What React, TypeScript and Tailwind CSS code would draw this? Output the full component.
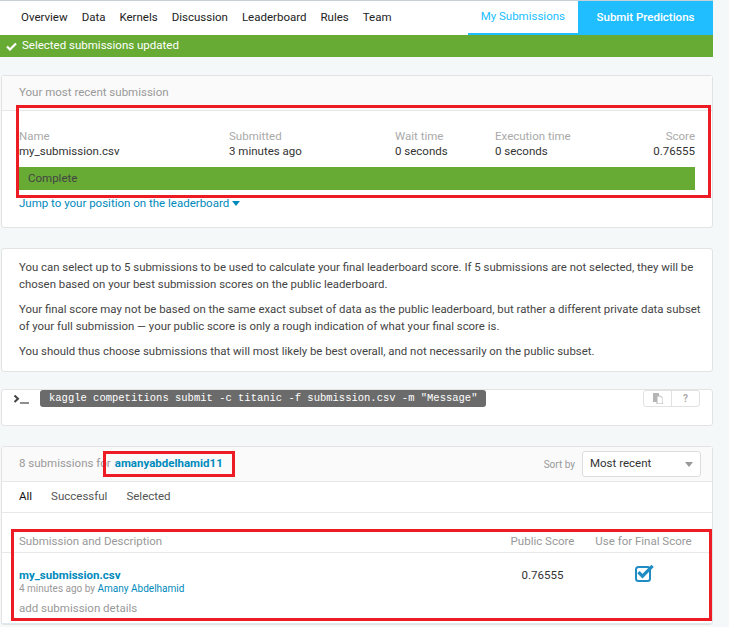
import React from 'react';

const navItems = ['Overview', 'Data', 'Kernels', 'Discussion', 'Leaderboard', 'Rules', 'Team'];

function CheckSquare() {
  return (
    <svg width="19" height="18" viewBox="0 0 19 18" fill="none">
      <rect x="1" y="3" width="14" height="14" rx="2.5" stroke="#1f8dc4" strokeWidth="2" />
      <path d="M4.5 9.2l3 3L16.5 3" stroke="#1f8dc4" strokeWidth="3.2" strokeLinecap="square" />
    </svg>
  );
}

export default function App() {
  return (
    <div className="relative w-[729px] h-[627px] overflow-hidden bg-[#f5f8f9] font-['Roboto',sans-serif] text-[11.5px] text-[#333]">
      <div className="h-px w-[713px] bg-[#c7d0d8]" />
      <div className="w-[713px]">
        {/* Nav */}
        <div className="flex h-[34px] bg-white">
          <div className="flex items-center gap-[14px] pl-[21px] text-[#222]">
            {navItems.map((n) => (
              <span key={n}>{n}</span>
            ))}
          </div>
          <div className="ml-auto flex">
            <div className="flex items-center px-[13px] text-[#20beff] border-b-2 border-[#20beff]">My Submissions</div>
            <div className="flex w-[135px] items-center justify-center bg-[#20beff] font-medium text-white">Submit Predictions</div>
          </div>
        </div>
        {/* Banner */}
        <div className="flex h-[22px] items-center gap-[5px] bg-[#67ab34] pl-[6px] text-white">
          <svg width="11" height="9" viewBox="0 0 11 9">
            <path d="M1 4.5l3 3L10 1.5" stroke="white" strokeWidth="2.2" fill="none" />
          </svg>
          <span>Selected submissions updated</span>
        </div>
      </div>

      <div className="ml-[1px] w-[712px] pt-[18px]">
        {/* Most recent submission */}
        <div className="rounded-[3px] border border-[#e3e3e3] bg-white">
          <div className="flex h-[35px] items-center border-b border-[#e8e8e8] bg-[#fafafa] px-[17px] text-[#999]">
            Your most recent submission
          </div>
          <div className="px-[17px] pt-[18px] pb-[17px]">
            <div className="grid grid-cols-[210px_166px_100px_1fr_auto] leading-[15px]">
              <div>
                <div className="text-[#aaa]">Name</div>
                <div>my_submission.csv</div>
              </div>
              <div>
                <div className="text-[#aaa]">Submitted</div>
                <div>3 minutes ago</div>
              </div>
              <div>
                <div className="text-[#aaa]">Wait time</div>
                <div>0 seconds</div>
              </div>
              <div>
                <div className="text-[#aaa]">Execution time</div>
                <div>0 seconds</div>
              </div>
              <div className="text-right">
                <div className="text-[#aaa]">Score</div>
                <div>0.76555</div>
              </div>
            </div>
            <div className="mt-[8px] flex h-[23px] items-center bg-[#67ab34] pl-[9px] text-[#444]">Complete</div>
            <div className="mt-[6px] flex items-center gap-[3px] leading-[14px] text-[#008abc]">
              Jump to your position on the leaderboard
              <svg width="8" height="5" viewBox="0 0 8 5">
                <path d="M0 0h8L4 5z" fill="#008abc" />
              </svg>
            </div>
          </div>
        </div>

        {/* Info */}
        <div className="mt-[20px] rounded-[3px] border border-[#e3e3e3] bg-white pl-[17px] pr-[3px] pt-[10px] pb-[11px] text-[11.4px] leading-[17px] text-[#444]">
          <p className="mb-[8px]">
            You can select up to 5 submissions to be used to calculate your final leaderboard score. If 5 submissions are not selected, they will be chosen based on your best submission scores on the public leaderboard.
          </p>
          <p className="mb-[8px]">
            Your final score may not be based on the same exact subset of data as the public leaderboard, but rather a different private data subset of your full submission — your public score is only a rough indication of what your final score is.
          </p>
          <p>
            You should thus choose submissions that will most likely be best overall, and not necessarily on the public subset.
          </p>
        </div>

        {/* CLI */}
        <div className="mt-[17px] flex h-[37px] items-start rounded-[3px] border border-[#e3e3e3] bg-white pl-[11px] pr-[12px]">
          <svg className="mt-[4px]" width="17" height="10" viewBox="0 0 17 10">
            <path d="M1.5 1.5L5 4.8 1.5 8" stroke="#444" strokeWidth="2" fill="none" />
            <path d="M7 9h9" stroke="#444" strokeWidth="1.2" />
          </svg>
          <div className="ml-[10px] flex h-[17px] items-center rounded-[3px] bg-[#6b6b6b] px-[9px] font-['Liberation_Mono',monospace] text-[10.5px] text-white">
            kaggle competitions submit -c titanic -f submission.csv -m "Message"
          </div>
          <div className="ml-auto flex h-[17px] rounded-[3px] border border-[#e2e2e2]">
            <div className="flex w-[28px] items-center justify-center border-r border-[#e2e2e2]">
              <svg width="10" height="11" viewBox="0 0 10 11">
                <rect x="0" y="0" width="6" height="9" fill="#b5b5b5" />
                <path d="M4 3h3.5L10 5.5V11H4z" fill="white" stroke="#b5b5b5" strokeWidth="1" />
              </svg>
            </div>
            <div className="flex w-[27px] items-center justify-center text-[10px] font-bold text-[#aaa]">?</div>
          </div>
        </div>

        {/* Submissions */}
        <div className="mt-[20px] rounded-[3px] border border-[#e3e3e3] bg-white">
          <div className="flex h-[35px] items-center border-b border-[#e8e8e8] bg-[#fafafa] pl-[17px] pr-[11px]">
            <span className="text-[#999]">8 submissions for</span>
            <span className="ml-[4px] font-bold text-[#008abc]">amanyabdelhamid11</span>
            <span className="ml-auto text-[10px] text-[#999]">Sort by</span>
            <div className="ml-[7px] flex h-[26px] w-[119px] items-center justify-between rounded-[3px] border border-[#ddd] bg-white pl-[7px] pr-[7px] text-[#333]">
              <span>Most recent</span>
              <svg width="8" height="5" viewBox="0 0 8 5">
                <path d="M0 0h8L4 5z" fill="#999" />
              </svg>
            </div>
          </div>
          <div className="flex h-[31px] items-center gap-[19px] border-b border-[#e8e8e8] pl-[17px] text-[#555]">
            <span className="text-[#111]">All</span>
            <span>Successful</span>
            <span>Selected</span>
          </div>
          <div className="pt-[18px]">
            <div className="grid h-[22px] grid-cols-[1fr_85px_117px] items-center border-b border-[#e8e8e8] pl-[17px] pr-[10px] text-[#999]">
              <span>Submission and Description</span>
              <span className="text-center">Public Score</span>
              <span className="text-center">Use for Final Score</span>
            </div>
            <div className="grid grid-cols-[1fr_85px_117px] border-b border-[#dde9ee] pl-[17px] pr-[10px] pt-[15px] pb-[8px]">
              <div>
                <div className="font-bold leading-[14px] text-[#008abc]">my_submission.csv</div>
                <div className="leading-[14px] text-[10px] text-[#999]">
                  4 minutes ago by <span className="text-[#008abc]">Amany Abdelhamid</span>
                </div>
                <div className="mt-[5px] leading-[14px] text-[#999]">add submission details</div>
              </div>
              <div className="text-center leading-[14px] text-[#333]">0.76555</div>
              <div className="flex justify-center">
                <div className="-mt-[4px] ml-[2px]">
                  <CheckSquare />
                </div>
              </div>
            </div>
          </div>
        </div>
      </div>

      {/* Annotation boxes */}
      <div className="absolute left-[16px] top-[105px] h-[93px] w-[695px] border-[3px] border-[#ed1c24]" />
      <div className="absolute left-[103px] top-[451px] h-[26px] w-[132px] border-[3px] border-[#ed1c24]" />
      <div className="absolute left-[11px] top-[529px] h-[92px] w-[701px] border-[3px] border-[#ed1c24]" />
    </div>
  );
}
